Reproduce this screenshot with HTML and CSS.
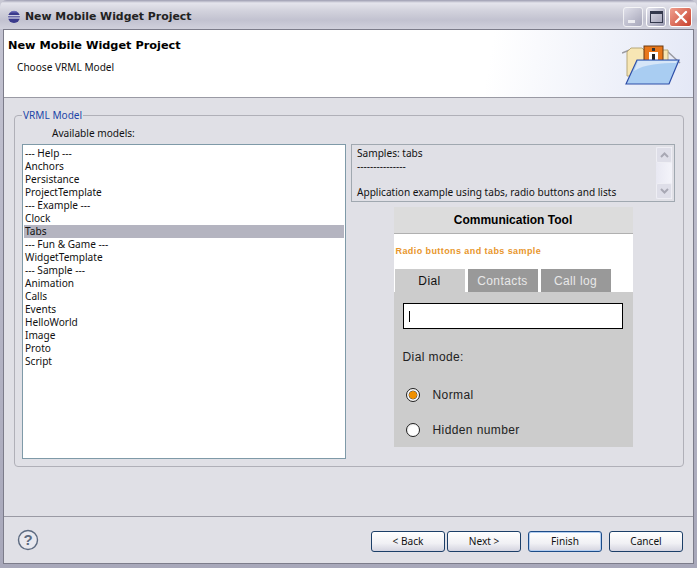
FILE: index.html
```html
<!DOCTYPE html>
<html lang="en">
<head>
    <meta charset="UTF-8">
    <meta name="viewport" content="width=device-width, initial-scale=1.0">
    <title>New Mobile Widget Project</title>
    <link rel="stylesheet" href="styles.css">
</head>
<body>
    <div class="window">
        <div class="titlebar">
            <svg class="app-icon" width="14" height="14" viewBox="0 0 14 14">
                <circle cx="7" cy="7" r="6" fill="#3a3a8c"/>
                <path d="M1 5.2h12v1H1zM1 7.6h12v1H1z" fill="#fff"/>
                <path d="M3 2.4a6 6 0 0 1 8 0z" fill="#6a6ab8"/>
            </svg>
            <span class="title-text">New Mobile Widget Project</span>
            <div class="win-buttons">
                <div class="win-btn win-min"><span class="min-bar"></span></div>
                <div class="win-btn win-max"><span class="max-box"></span></div>
                <div class="win-btn win-close">
                    <svg width="14" height="14" viewBox="0 0 14 14">
                        <path d="M2 2l10 10M12 2L2 12" stroke="#fff" stroke-width="2.4" stroke-linecap="round"/>
                    </svg>
                </div>
            </div>
        </div>

        <div class="client">
            <div class="header">
                <div class="header-text">
                    <div class="header-title">New Mobile Widget Project</div>
                    <div class="header-sub">Choose VRML Model</div>
                </div>
                <svg class="header-icon" width="60" height="50" viewBox="0 0 60 50">
                    <path d="M0 11l10-4M45 9l13 12" stroke="#9a9aa0" stroke-width="1.5" fill="none"/>
                    <path d="M5 10l4-4h11l2 2h24v26H5z" fill="#f7e6b4" stroke="#b8a878"/>
                    <rect x="22" y="4" width="19" height="15" fill="#e8771a" stroke="#6a3a10"/>
                    <rect x="27" y="10" width="9" height="9" fill="#fff"/>
                    <rect x="30" y="6" width="3" height="3" fill="#333"/>
                    <rect x="30" y="12" width="3" height="6" fill="#222"/>
                    <path d="M4 42L15 18h42L47 42z" fill="#a9cdf2" stroke="#2f4fa8" stroke-width="1.2"/>
                    <path d="M12 29c10-7 28-8 42-8l1-2H16z" fill="#d6e6f8"/>
                </svg>
            </div>

            <div class="body">
                <fieldset class="group">
                    <legend class="group-label">VRML Model</legend>
                    <div class="avail-label">Available models:</div>
                    <div class="group-row">
                        <ul class="model-list">
                            <li>--- Help ---</li>
                            <li>Anchors</li>
                            <li>Persistance</li>
                            <li>ProjectTemplate</li>
                            <li>--- Example ---</li>
                            <li>Clock</li>
                            <li class="selected">Tabs</li>
                            <li>--- Fun &amp; Game ---</li>
                            <li>WidgetTemplate</li>
                            <li>--- Sample ---</li>
                            <li>Animation</li>
                            <li>Calls</li>
                            <li>Events</li>
                            <li>HelloWorld</li>
                            <li>Image</li>
                            <li>Proto</li>
                            <li>Script</li>
                        </ul>
                        <div class="right-col">
                            <div class="desc-box">
                                <div class="desc-text">
                                    <div>Samples: tabs</div>
                                    <div>---------------</div>
                                    <div class="desc-gap">Application example using tabs, radio buttons and lists</div>
                                </div>
                                <div class="scrollbar">
                                    <div class="scroll-btn"><svg width="9" height="6" viewBox="0 0 9 6"><path d="M1 5l3.5-3.5L8 5" stroke="#a8a8b4" stroke-width="2" fill="none"/></svg></div>
                                    <div class="scroll-btn"><svg width="9" height="6" viewBox="0 0 9 6"><path d="M1 1l3.5 3.5L8 1" stroke="#a8a8b4" stroke-width="2" fill="none"/></svg></div>
                                </div>
                            </div>
                            <div class="phone">
                                <div class="phone-title">Communication Tool</div>
                                <div class="phone-top">
                                    <div class="phone-caption">Radio buttons and tabs sample</div>
                                    <div class="tabs">
                                        <div class="tab active">Dial</div>
                                        <div class="tab">Contacts</div>
                                        <div class="tab">Call log</div>
                                    </div>
                                </div>
                                <div class="phone-body">
                                    <div class="dial-input"><span class="caret"></span></div>
                                    <div class="dial-label">Dial mode:</div>
                                    <div class="radio-row">
                                        <span class="radio checked"></span>
                                        <span>Normal</span>
                                    </div>
                                    <div class="radio-row second">
                                        <span class="radio"></span>
                                        <span>Hidden number</span>
                                    </div>
                                </div>
                            </div>
                        </div>
                    </div>
                </fieldset>
            </div>

            <div class="footer">
                <svg class="help-icon" width="22" height="22" viewBox="0 0 22 22">
                    <circle cx="11" cy="11" r="9.5" fill="#e8e8ee" stroke="#5c6a80" stroke-width="1.4"/>
                    <text x="11" y="16" text-anchor="middle" class="help-mark">?</text>
                </svg>
                <div class="footer-buttons">
                    <button class="btn">&lt; Back</button>
                    <button class="btn">Next &gt;</button>
                    <button class="btn default finish">Finish</button>
                    <button class="btn cancel">Cancel</button>
                </div>
            </div>
        </div>
    </div>
</body>
</html>
```

FILE: styles.css
```css
* {
    box-sizing: border-box;
}
html, body {
    margin: 0;
    height: 100%;
    overflow: hidden;
}
body {
    font-family: "Noto Sans", "DejaVu Sans", sans-serif;
    font-size: 10.1px;
    color: #111;
    background: #c8c8d4;
}
.window {
    width: 697px;
    height: 568px;
    display: flex;
    flex-direction: column;
    background: linear-gradient(#c4c4d2, #a8a8ba);
    border-radius: 7px 7px 0 0;
}
.titlebar {
    height: 29px;
    display: flex;
    align-items: center;
    padding: 4px 5px 0 7px;
    background: linear-gradient(#9c9cb0 0, #e4e4ec 3px, #d4d4de 10px, #c2c2d0 20px, #d0d0dc 29px);
    border-radius: 7px 7px 0 0;
}
.app-icon {
    flex: none;
}
.title-text {
    margin-left: 4px;
    font-family: "DejaVu Sans", sans-serif;
    font-size: 10.9px;
    font-weight: bold;
    color: #222;
}
.win-buttons {
    margin-left: auto;
    display: flex;
    gap: 3px;
}
.win-btn {
    width: 20px;
    height: 20px;
    border-radius: 3px;
    border: 1px solid #fff;
    display: flex;
    align-items: center;
    justify-content: center;
    background: linear-gradient(135deg, #e4e4ee, #9a9ab0);
}
.win-min {
    align-items: flex-end;
    justify-content: flex-start;
    padding: 0 0 3px 4px;
    opacity: 0.7;
}
.min-bar {
    width: 7px;
    height: 3px;
    background: #fff;
}
.max-box {
    width: 13px;
    height: 12px;
    border: 1px solid #33384c;
    border-top-width: 3px;
}
.win-close {
    width: 23px;
    background: linear-gradient(135deg, #f0a090, #c8402c);
}
.client {
    flex: 1;
    margin: 0 3px 4px 3px;
    border: 1px solid #7c7c8a;
    background: #e0e0e6;
    display: flex;
    flex-direction: column;
}
.header {
    height: 68px;
    flex: none;
    display: flex;
    justify-content: space-between;
    background: linear-gradient(100deg, #fff 70%, #e4e8f6 100%);
    border-bottom: 1px solid #9a9aa4;
}
.header-title {
    margin: 9px 0 0 4px;
    font-family: "DejaVu Sans", sans-serif;
    font-size: 11.3px;
    font-weight: bold;
    color: #000;
}
.header-sub {
    margin: 8px 0 0 13px;
}
.header-icon {
    margin: 12px 11px 0 0;
}
.body {
    flex: 1;
    padding: 10px 9px 0 10px;
}
.group {
    margin: 0;
    padding: 0 7px 7px 7px;
    height: 359px;
    border: 1px solid #b0b0b8;
    border-radius: 4px;
}
.group-label {
    padding: 0 1px;
    margin-left: 0;
    color: #1c46a8;
    line-height: 14px;
}
.avail-label {
    margin: 4px 0 4px 30px;
    line-height: 14px;
}
.group-row {
    display: flex;
    gap: 5px;
}
.model-list {
    list-style: none;
    margin: 0;
    padding: 2px 1px;
    width: 324px;
    height: 315px;
    flex: none;
    background: #fff;
    border: 1px solid #7f9aa8;
}
.model-list li {
    height: 13px;
    line-height: 13px;
    padding-left: 1px;
}
.model-list .selected {
    background: #b4b4c0;
}
.right-col {
    width: 324px;
    display: flex;
    flex-direction: column;
    align-items: center;
}
.desc-box {
    width: 100%;
    height: 58px;
    flex: none;
    display: flex;
    justify-content: space-between;
    border: 1px solid #a0a8b0;
    padding: 2px 2px 2px 5px;
    line-height: 13px;
}
.desc-gap {
    margin-top: 13px;
}
.scrollbar {
    width: 16px;
    display: flex;
    flex-direction: column;
    justify-content: space-between;
    background: linear-gradient(90deg, #e8e8f2, #f4f4fa);
}
.scroll-btn {
    height: 16px;
    display: flex;
    align-items: center;
    justify-content: center;
    background: #dedee8;
    border: 1px solid #eeeef4;
    border-radius: 2px;
}
.phone {
    width: 239px;
    height: 240px;
    flex: none;
    margin-top: 5px;
    font-family: "Liberation Sans", Arial, sans-serif;
}
.phone-title {
    height: 27px;
    line-height: 26px;
    text-align: center;
    font-size: 12px;
    font-weight: bold;
    color: #000;
    background: #dcdcdc;
    border-bottom: 1px solid #b0b0b0;
}
.phone-top {
    height: 58px;
    padding: 0 0 0 1px;
    background: #fff;
    display: flex;
    flex-direction: column;
    justify-content: space-between;
}
.phone-caption {
    margin: 12px 0 0 1px;
    font-size: 9px;
    font-weight: bold;
    letter-spacing: 0.42px;
    color: #e8962c;
}
.tabs {
    display: flex;
    gap: 3px;
}
.tab {
    width: 70px;
    height: 23px;
    line-height: 25px;
    text-align: center;
    font-size: 12px;
    letter-spacing: 0.4px;
    color: #e8e8e8;
    background: #999;
}
.tab.active {
    color: #111;
    background: #ccc;
}
.phone-body {
    height: 155px;
    padding: 11px 10px 0 9px;
    background: #ccc;
    font-size: 12px;
    letter-spacing: 0.4px;
    color: #222;
}
.dial-input {
    height: 26px;
    border: 1px solid #000;
    background: #fff;
    display: flex;
    align-items: center;
    padding-left: 5px;
}
.caret {
    width: 1px;
    height: 11px;
    background: #000;
}
.dial-label {
    margin-top: 21px;
    line-height: 14px;
}
.radio-row {
    display: flex;
    align-items: center;
    gap: 13px;
    height: 16px;
    margin: 23px 0 0 3px;
}
.radio-row.second {
    margin-top: 19px;
}
.radio {
    width: 14px;
    height: 14px;
    flex: none;
    border-radius: 50%;
    border: 1px solid #222;
    background: radial-gradient(circle at 60% 60%, #fff 50%, #d8d8d8);
}
.radio.checked {
    background: radial-gradient(circle, #f09000 0, #f09000 3.5px, #555 4px, #fff 4.8px, #ddd);
}
.footer {
    margin-top: auto;
    height: 47px;
    flex: none;
    display: flex;
    align-items: center;
    justify-content: space-between;
    padding: 2px 10px 0 13px;
    border-top: 1px solid #9a9aa4;
}
.help-icon {
    margin-top: -2px;
}
.help-mark {
    font-family: "Liberation Sans", Arial, sans-serif;
    font-size: 15px;
    font-weight: bold;
    fill: #5c6a80;
}
.footer-buttons {
    display: flex;
    gap: 2px;
}
.btn {
    width: 74px;
    height: 21px;
    padding: 0;
    font: inherit;
    color: #111;
    border: 1px solid #1c3f68;
    border-radius: 3px;
    background: linear-gradient(#fff, #f0f0f4 60%, #d4d4e0);
}
.btn.default {
    border-color: #1c4c88;
    box-shadow: inset 0 0 0 1px #b4cef0;
}
.finish, .cancel {
    margin-left: 5px;
}
```
